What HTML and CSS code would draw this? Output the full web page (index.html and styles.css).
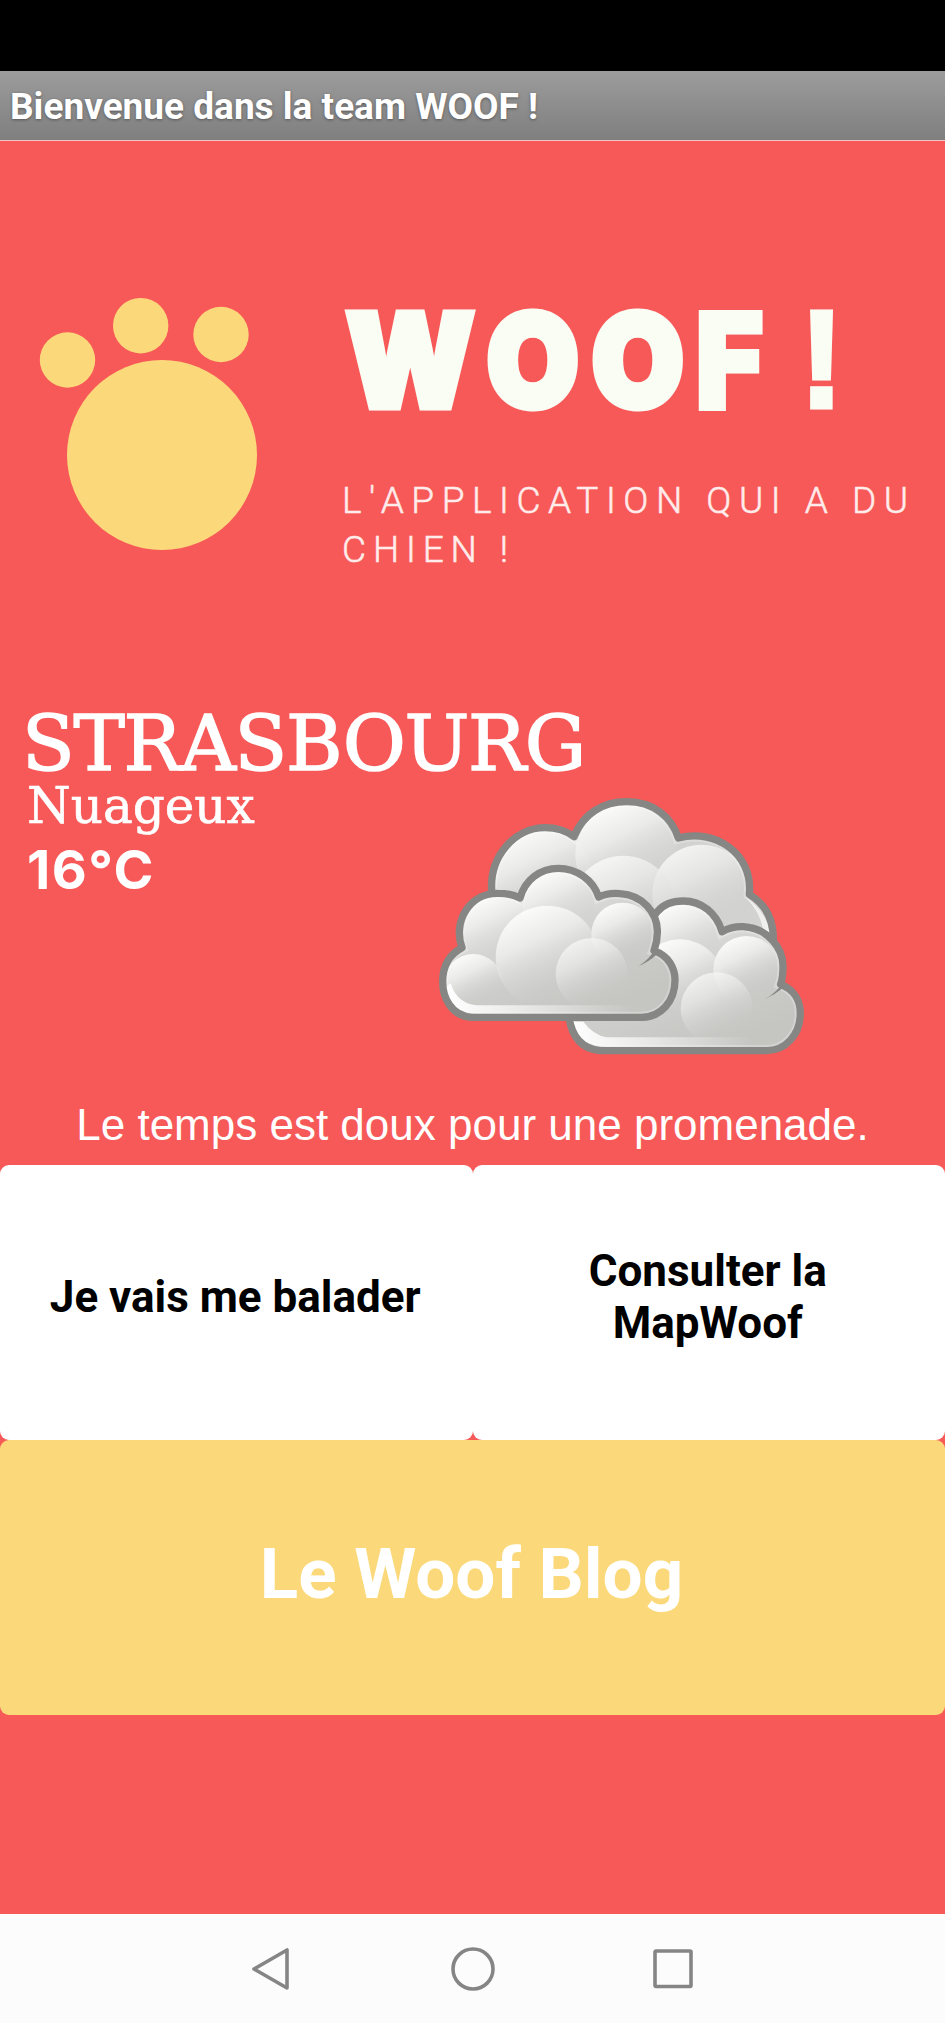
FILE: index.html
```
<!DOCTYPE html>
<html lang="fr">
<head>
    <meta charset="UTF-8">
    <title>Woof</title>
    <link rel="stylesheet" href="styles.css">
</head>
<body>
<div class="status"></div>
<div class="title">Bienvenue dans la team WOOF !</div>

<div class="main">
    <svg class="logo" viewBox="0 141 945 564">
        <!-- patte -->
        <g fill="#fbd97b">
            <circle cx="67.5" cy="360" r="27.7"/>
            <circle cx="140.7" cy="325.7" r="27.7"/>
            <circle cx="221" cy="334.5" r="27.7"/>
            <circle cx="162" cy="455" r="95"/>
        </g>
        <text class="brand" transform="translate(346 407) scale(.92 1)" x="0 153 267" y="0">WOO<tspan class="f" x="380">F</tspan> <tspan class="bang" x="494">!</tspan></text>
        <text class="slogan" x="342" y="512.500" textLength="566">L'APPLICATION QUI A DU</text>
        <text class="slogan" x="342" y="561.500" textLength="166">CHIEN !</text>
    </svg>

    <h1 class="city">STRASBOURG</h1>
    <div class="weather">
        <div class="infos">
            <p class="sky">Nuageux</p>
            <p class="temp">16°C</p>
        </div>
        <svg class="clouds" viewBox="0 6 1200 864">
            <defs>
                <linearGradient id="base" x1="0" y1="0" x2=".6" y2="1">
                    <stop offset="0" stop-color="#f4f4f3"/>
                    <stop offset=".6" stop-color="#cfcfcd"/>
                    <stop offset="1" stop-color="#c5c6c2"/>
                </linearGradient>
                <linearGradient id="puff" x1=".2" y1="0" x2=".6" y2=".86">
                    <stop offset="0" stop-color="#fff"/>
                    <stop offset=".4" stop-color="#ededec" stop-opacity=".9"/>
                    <stop offset="1" stop-color="#cbccc9" stop-opacity="0"/>
                </linearGradient>
                <linearGradient id="shine" x1="0" y1="0" x2="1" y2="0">
                    <stop offset="0" stop-color="#fff"/>
                    <stop offset="1" stop-color="#fff" stop-opacity="0"/>
                </linearGradient>
                <path id="back" d="M216 345C203 230 285 143 375 143C412 143 440 153 462 170C490 100 550 65 620 65C700 65 755 110 775 174C885 145 1000 220 988 343C1040 375 1062 425 1060 485L900 600L300 500Z"/>
                <path id="right" d="M540 812C480 806 455 765 447 712L712 395C730 373 760 363 790 363C845 363 890 400 906 455C930 442 950 439 970 440C1045 445 1090 505 1089 560C1089 580 1088 596 1082 613C1125 630 1141 665 1141 700C1141 765 1095 812 1040 812Z"/>
                <path id="front" d="M155 712C92 708 68 650 68 605C68 555 90 522 126 503C98 430 145 338 235 340C262 340 283 345 300 354C315 300 360 265 415 265C470 265 520 300 536 351C560 340 580 339 600 341C670 345 710 400 712 450C713 472 710 490 702 512C747 528 765 565 765 600C765 665 722 712 665 712Z"/>
                <clipPath id="backClip"><use href="#back"/></clipPath>
                <clipPath id="rightClip"><use href="#right"/></clipPath>
                <clipPath id="frontClip"><use href="#front"/></clipPath>
            </defs>

            <g clip-path="url(#backClip)">
                <use href="#back" fill="#d2d3d0"/>
                <circle cx="372" cy="292" r="148" fill="url(#puff)"/>
                <circle cx="618" cy="225" r="152" fill="url(#puff)"/>
                <circle cx="845" cy="342" r="148" fill="url(#puff)" opacity=".8"/>
                <circle cx="610" cy="385" r="158" fill="url(#puff)" opacity=".8"/>
                <path d="M975 350Q1045 400 1050 470L1030 460Q1025 400 975 350Z" fill="#efefee"/>
                <use href="#back" class="rim"/>
            </g>
            <use href="#back" class="edge"/>

            <g clip-path="url(#rightClip)">
                <use href="#right" fill="url(#base)"/>
                <circle cx="793" cy="473" r="103" fill="url(#puff)"/>
                <circle cx="780" cy="610" r="132" fill="url(#puff)"/>
                <circle cx="980" cy="568" r="100" fill="url(#puff)"/>
                <circle cx="890" cy="685" r="108" fill="url(#puff)" opacity=".7"/>
                <path d="M450 725Q480 800 560 800H1000V772H560Q520 765 490 725Z" fill="url(#shine)"/>
                <use href="#right" class="rim"/>
            </g>
            <use href="#right" class="edge"/>
            <path class="notch" d="M1090 604Q1072 638 1032 659Q1062 646 1092 622Z"/>

            <g clip-path="url(#frontClip)">
                <use href="#front" fill="url(#base)"/>
                <circle cx="236" cy="450" r="104" fill="url(#puff)"/>
                <circle cx="415" cy="378" r="106" fill="url(#puff)"/>
                <circle cx="160" cy="610" r="88" fill="url(#puff)"/>
                <circle cx="382" cy="532" r="155" fill="url(#puff)"/>
                <circle cx="608" cy="462" r="94" fill="url(#puff)"/>
                <circle cx="515" cy="582" r="108" fill="url(#puff)" opacity=".7"/>
                <path d="M78 620Q90 700 170 701H640V676H170Q110 670 92 610Z" fill="url(#shine)"/>
                <use href="#front" class="rim"/>
            </g>
            <use href="#front" class="edge"/>
            <path class="notch" d="M708 502Q690 538 656 558Q686 546 712 522Z"/>
        </svg>
    </div>
    <p class="advice">Le temps est doux pour une promenade.</p>

    <div class="buttons">
        <button class="btn">Je vais me balader</button>
        <button class="btn">Consulter la<br>MapWoof</button>
        <button class="btn blog">Le Woof Blog</button>
    </div>
</div>

<div class="nav">
    <svg viewBox="0 0 44 44"><path d="M3 22L36 3V41Z"/></svg>
    <svg viewBox="0 0 44 44"><circle cx="22" cy="22" r="20"/></svg>
    <svg viewBox="0 0 44 44"><rect x="4" y="4" width="36" height="35.500" rx="1"/></svg>
</div>
</body>
</html>
```
FILE: styles.css
```
* {
    margin: 0;
    padding: 0;
    box-sizing: border-box;
}

body {
    display: flex;
    flex-direction: column;
    width: 945px;
    height: 2023px;
    background: #f75958;
    font-family: Roboto, "Liberation Sans", sans-serif;
    color: #fff;
}

svg {
    display: block;
}

.status {
    height: 71px;
    background: #000;
}

.title {
    height: 70px;
    padding-left: 10px;
    border-bottom: 1px solid #f3c4c4;
    background: linear-gradient(#9c9c9c, #7f7f7f);
    font-size: 37px;
    font-weight: bold;
    line-height: 71px;
    text-shadow: 0 1px 3px #555;
}

.main {
    flex: 1;
}

.logo {
    width: 945px;
    height: 564px;
}

.brand {
    font-family: Inter, sans-serif;
    font-size: 129px;
    font-weight: 900;
    fill: #fafdf4;
    stroke: #fafdf4;
    stroke-width: 7;
}

.brand .f {
    font-family: Roboto, sans-serif;
    font-size: 131px;
}

.brand .bang {
    font-family: "Liberation Sans", sans-serif;
    font-size: 138px;
    stroke-width: 5;
}

.slogan {
    font-family: Roboto, sans-serif;
    font-size: 37px;
    font-weight: 300;
    fill: #ffeceb;
    stroke: #ffeceb;
    stroke-width: .5;
}

.city, .sky {
    font-family: "DejaVu Serif", serif;
    font-weight: normal;
}

.city {
    padding-left: 22px;
    font-size: 77px;
    line-height: 77px;
    letter-spacing: -1.3px;
    -webkit-text-stroke: 1.6px #fff;
}

.weather {
    display: flex;
}

.infos {
    width: 420px;
    padding-left: 27px;
}

.sky {
    font-size: 50px;
    line-height: 48px;
    -webkit-text-stroke: .6px #fff;
}

.temp {
    font-family: Inter, sans-serif;
    font-size: 54px;
    font-weight: bold;
    line-height: 79px;
    letter-spacing: 1.4px;
}

.clouds {
    width: 400px;
    height: 288px;
}

.edge {
    fill: none;
    stroke: #868784;
    stroke-width: 22;
    stroke-linejoin: round;
}

.rim {
    fill: none;
    stroke: #fff;
    stroke-opacity: .25;
    stroke-width: 34;
}

.notch {
    fill: #868784;
}

.advice {
    padding-top: 14px;
    font-family: "Liberation Sans", sans-serif;
    font-size: 44px;
    line-height: 81px;
    text-align: center;
}

.buttons {
    display: grid;
    grid-template-columns: 1fr 1fr;
    grid-auto-rows: 275px;
}

.btn {
    padding: 0 2px 11px 0;
    border: none;
    border-radius: 9px;
    background: #fff;
    color: #000;
    font-family: inherit;
    font-size: 44px;
    font-weight: bold;
    line-height: 52px;
}

.blog {
    grid-column: span 2;
    padding-bottom: 8px;
    background: #fbd97b;
    color: #fff;
    font-size: 71px;
}

.nav {
    display: flex;
    justify-content: center;
    gap: 156px;
    height: 109px;
    padding-top: 33px;
    background: #fcfcfc;
}

.nav svg {
    width: 44px;
    height: 44px;
    fill: none;
    stroke: #858585;
    stroke-width: 3.6;
    stroke-linejoin: round;
}
```
